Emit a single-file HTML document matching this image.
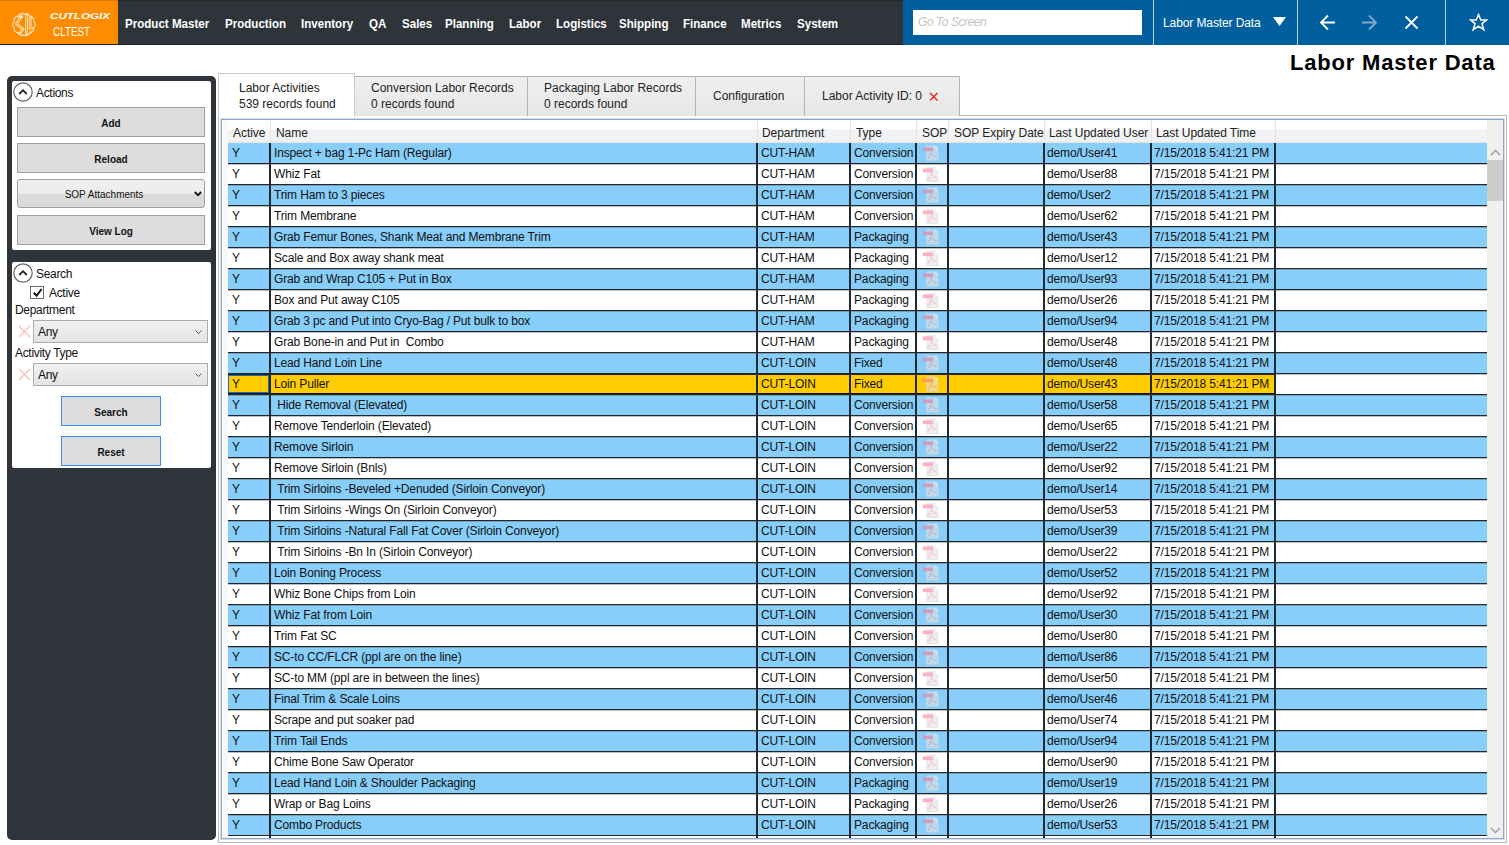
<!DOCTYPE html>
<html><head><meta charset="utf-8">
<style>
*{box-sizing:border-box;margin:0;padding:0}
html,body{width:1509px;height:845px;overflow:hidden;background:#fff;font-family:"Liberation Sans",sans-serif;color:#000;position:relative}
.abs{position:absolute}
#hdr{position:absolute;left:0;top:0;width:1509px;height:45px;background:#2e343a;border-top:1px solid #262b30;border-bottom:1px solid #1f2327}
#logo{position:absolute;left:0;top:0;width:118px;height:44px;background:#ff8c00;border-top:1px solid #d57a10}
.nav{position:absolute;top:15.5px;font-size:13px;font-weight:bold;color:#fff;white-space:nowrap;transform:scaleX(0.89);transform-origin:left}
#blue{position:absolute;left:903px;top:0;width:606px;height:45px;background:#025f9f}
.dv{position:absolute;top:0;width:1px;height:45px;background:#b9cfe3}
#title{position:absolute;left:1290px;top:49.5px;font-size:22px;font-weight:bold;letter-spacing:0.8px;white-space:nowrap}
#lp{position:absolute;left:7px;top:76px;width:209px;height:764px;background:#2e343a;border-radius:5px}
.box{position:absolute;background:#fff;border-radius:2px}
.btn{position:absolute;background:#dddddd;border:1px solid #a0a0a0;font-size:10px;font-weight:bold;text-align:center;color:#111}
.lbl{position:absolute;font-size:12px;letter-spacing:-0.32px;white-space:nowrap;color:#111}
.tab{position:absolute;top:76px;height:40px;background:linear-gradient(#f0f0f0,#e6e6e6);border:1px solid #b4b4b4;border-bottom:none;font-size:12px;letter-spacing:0px;color:#222;white-space:nowrap}
#grid{position:absolute;left:221px;top:119px;width:1283px;height:720px;border:1px solid #8ea7c2;background:#fff;overflow:hidden;box-shadow:0 0 0 1px rgba(160,185,210,0.45)}
.r{position:absolute;left:228px;width:1259px;height:21px;border-bottom:1px solid #1c2730}
.r.b{background:#87cefa}
.r.w{background:#fff}
.r.s{background:#fff}
.c{position:absolute;top:3px;font-size:12px;letter-spacing:-0.15px;white-space:nowrap;color:#111}
.pdfw{position:absolute;top:2px;opacity:0.6;line-height:0}
.vl{position:absolute;top:143px;width:2px;height:696px;background:#1f2b34}
.hvl{position:absolute;top:121px;width:1px;height:21px;background:#e2e2e4}
.hl2{position:absolute;left:228px;width:1259px;height:1px;background:rgba(90,70,50,0.35)}
.hd{position:absolute;top:5.5px;font-size:12px;letter-spacing:-0.05px;white-space:nowrap;color:#222}
</style></head><body>
<div id="hdr"></div>
<div id="logo">
  <svg class="abs" style="left:12px;top:12px" width="24" height="23" viewBox="0 0 24 23" fill="none" stroke-linejoin="round" stroke-linecap="round">
    <path d="M12.0 1.1 Q15.9 -0.5 18.1 3.1 Q22.2 4.1 21.9 8.3 Q24.6 11.5 21.9 14.7 Q22.2 18.9 18.1 19.9 Q15.9 23.5 12.0 21.9 Q8.1 23.5 5.9 19.9 Q1.8 18.9 2.1 14.7 Q-0.6 11.5 2.1 8.3 Q1.8 4.1 5.9 3.1 Q8.1 -0.5 12.0 1.1Z" stroke="#ffe8c6" stroke-width="1.1"/>
    <g stroke="#ffe8c6" stroke-width="2.8"><path d="M14.7 1.5 V21.2"/><path d="M9.6 3.6 C7.8 3.6 7.2 4.6 7.8 5.6 L4.4 11 L11 16.2 L8 20"/><path d="M18.2 5.4 V15.2 H20.2"/></g>
    <g stroke="#ff8c00" stroke-width="0.9"><path d="M14.7 2.5 V20.2"/><path d="M9.6 3.6 C7.8 3.6 7.2 4.6 7.8 5.6 L4.4 11 L11 16.2 L8 20"/><path d="M18.2 5.4 V15.2 H20.2"/></g>
    <circle cx="9" cy="4.2" r="1.3" fill="#ffe8c6"/><circle cx="7.6" cy="20.2" r="1.3" fill="#ffe8c6"/><circle cx="19" cy="18.8" r="1" fill="#ffe8c6"/>
  </svg>
  <div class="abs" style="left:50px;top:10px;font-size:9px;font-weight:bold;font-style:italic;color:#fff;transform:scaleX(1.29);transform-origin:left">CUTLOGIX</div>
  <div class="abs" style="left:53px;top:23px;font-size:13px;color:#fff;transform:scaleX(0.76);transform-origin:left">CLTEST</div>
</div>
<div class="nav" style="left:125px">Product Master</div>
<div class="nav" style="left:225px">Production</div>
<div class="nav" style="left:301px">Inventory</div>
<div class="nav" style="left:369px">QA</div>
<div class="nav" style="left:402px">Sales</div>
<div class="nav" style="left:445px">Planning</div>
<div class="nav" style="left:509px">Labor</div>
<div class="nav" style="left:556px">Logistics</div>
<div class="nav" style="left:619px">Shipping</div>
<div class="nav" style="left:683px">Finance</div>
<div class="nav" style="left:741px">Metrics</div>
<div class="nav" style="left:797px">System</div>
<div id="blue"></div>
<div class="abs" style="left:913px;top:10px;width:229px;height:25px;background:#fff"></div>
<div class="abs" style="left:918px;top:15px;font-size:12px;font-style:italic;color:#c4c4c4;letter-spacing:-0.45px">Go To Screen</div>
<div class="dv" style="left:1153px"></div>
<div class="dv" style="left:1297px"></div>
<div class="dv" style="left:1445px"></div>
<div class="abs" style="left:1163px;top:16px;font-size:12px;color:#fff;letter-spacing:-0.1px;white-space:nowrap">Labor Master Data</div>
<svg class="abs" style="left:1273px;top:17px" width="13" height="10"><path d="M0 0H13L6.5 9Z" fill="#fff"/></svg>
<svg class="abs" style="left:1319px;top:14px" width="18" height="17" fill="none" stroke="#fff" stroke-width="1.8"><path d="M16 8.5H2M9 1.5L2 8.5L9 15.5"/></svg>
<svg class="abs" style="left:1361px;top:14px" width="18" height="17" fill="none" stroke="#7fa9cf" stroke-width="1.8"><path d="M1 8.5H15M8 1.5L15 8.5L8 15.5"/></svg>
<svg class="abs" style="left:1404px;top:15px" width="15" height="15" fill="none" stroke="#fff" stroke-width="1.8"><path d="M1.5 1.5L13.5 13.5M13.5 1.5L1.5 13.5"/></svg>
<svg class="abs" style="left:1469px;top:13px" width="19" height="19" viewBox="0 0 19 19" fill="none" stroke="#fff" stroke-width="1.5"><path d="M9.5 1.5L11.8 7H17.5L13 10.6L14.8 16.8L9.5 13.2L4.2 16.8L6 10.6L1.5 7H7.2Z"/></svg>
<div id="title">Labor Master Data</div>

<div id="lp"></div>
<div class="box" style="left:12px;top:81px;width:199px;height:169px"></div>
<svg class="abs" style="left:13px;top:82px" width="21" height="21" fill="none"><circle cx="10" cy="10" r="9.2" stroke="#666" stroke-width="1.2"/><path d="M6.2 12L10 8.2L13.8 12" stroke="#222" stroke-width="1.8"/></svg>
<div class="lbl" style="left:36px;top:86px">Actions</div>
<div class="btn" style="left:17px;top:107px;width:188px;height:30px;line-height:31px">Add</div>
<div class="btn" style="left:17px;top:143px;width:188px;height:30px;line-height:31px">Reload</div>
<div class="btn" style="left:17px;top:179px;width:188px;height:29px;line-height:29px;font-weight:normal;font-size:10px;padding-right:14px;border-radius:3px;background:linear-gradient(#f1f1f1 0%,#ececec 50%,#dcdcdc 51%,#d9d9d9 100%)">SOP Attachments</div>
<svg class="abs" style="left:194px;top:191px" width="8" height="6" fill="none" stroke="#111" stroke-width="1.8"><path d="M0.8 1L4 4.2L7.2 1"/></svg>
<div class="btn" style="left:17px;top:215px;width:188px;height:30px;line-height:31px">View Log</div>

<div class="box" style="left:12px;top:262px;width:199px;height:206px"></div>
<svg class="abs" style="left:13px;top:263px" width="21" height="21" fill="none"><circle cx="10" cy="10" r="9.2" stroke="#666" stroke-width="1.2"/><path d="M6.2 12L10 8.2L13.8 12" stroke="#222" stroke-width="1.8"/></svg>
<div class="lbl" style="left:36px;top:267px">Search</div>
<div class="abs" style="left:30px;top:286px;width:14px;height:13px;border:1px solid #6a6a6a;background:#fff"></div>
<svg class="abs" style="left:32px;top:287px" width="11" height="11" fill="none" stroke="#111" stroke-width="2"><path d="M1.8 5.8L4.6 8.8L9.6 2"/></svg>
<div class="lbl" style="left:49px;top:286px">Active</div>
<div class="lbl" style="left:15px;top:303px">Department</div>
<svg class="abs" style="left:18px;top:325px" width="13" height="13" fill="none" stroke="#ffbdb5" stroke-width="1.3"><path d="M1 1L12 12M12 1L1 12"/></svg>
<div class="abs" style="left:33px;top:320px;width:175px;height:23px;background:linear-gradient(#f0f0f0,#e4e4e4);border:1px solid #acacac"></div>
<div class="lbl" style="left:38px;top:324.5px">Any</div>
<svg class="abs" style="left:195px;top:330px" width="7" height="4" fill="none" stroke="#555" stroke-width="1"><path d="M0.5 0.5L3.5 3.5L6.5 0.5"/></svg>
<div class="lbl" style="left:15px;top:346px">Activity Type</div>
<svg class="abs" style="left:18px;top:368px" width="13" height="13" fill="none" stroke="#ffbdb5" stroke-width="1.3"><path d="M1 1L12 12M12 1L1 12"/></svg>
<div class="abs" style="left:33px;top:363px;width:175px;height:23px;background:linear-gradient(#f0f0f0,#e4e4e4);border:1px solid #acacac"></div>
<div class="lbl" style="left:38px;top:367.5px">Any</div>
<svg class="abs" style="left:195px;top:373px" width="7" height="4" fill="none" stroke="#555" stroke-width="1"><path d="M0.5 0.5L3.5 3.5L6.5 0.5"/></svg>
<div class="btn" style="left:61px;top:396px;width:100px;height:30px;line-height:31px;border-color:#3c8ede">Search</div>
<div class="btn" style="left:61px;top:436px;width:100px;height:30px;line-height:31px;border-color:#3c8ede">Reset</div>

<!-- tabs -->
<div class="abs" style="left:218px;top:115px;width:1289px;height:728px;border:1px solid #b9b9b9;background:#fff"></div>
<div class="tab" style="left:354px;width:174px"><div class="abs" style="left:16px;top:3px;line-height:16px">Conversion Labor Records<br>0 records found</div></div>
<div class="tab" style="left:527px;width:169px"><div class="abs" style="left:16px;top:3px;line-height:16px">Packaging Labor Records<br>0 records found</div></div>
<div class="tab" style="left:695px;width:110px"><div class="abs" style="left:17px;top:12px">Configuration</div></div>
<div class="tab" style="left:804px;width:156px"><div class="abs" style="left:17px;top:12px">Labor Activity ID: 0</div>
  <svg class="abs" style="left:124px;top:15px" width="10" height="10" fill="none" stroke="#e8221c" stroke-width="1.4"><path d="M1 1L8.5 8.5M8.5 1L1 8.5"/></svg></div>
<div class="tab" style="left:218px;top:73px;width:137px;height:44px;background:#fff;border-color:#c9c9c9"><div class="abs" style="left:20px;top:5.5px;line-height:16px">Labor Activities<br>539 records found</div></div>

<div id="grid">
  <div class="abs" style="left:0;top:0;width:1265px;height:23px;background:linear-gradient(#fff 0px,#fff 9px,#f3f3f5 10px,#f2f2f4 21px,#ebe6e2 22px)"></div>
  <div class="abs" style="left:0;top:0;width:6px;height:718px;background:#f8f8fa"></div>
  <span class="hd" style="left:11px">Active</span>
  <span class="hd" style="left:54px">Name</span>
  <span class="hd" style="left:540px">Department</span>
  <span class="hd" style="left:634px">Type</span>
  <span class="hd" style="left:700px">SOP</span>
  <span class="hd" style="left:732px">SOP Expiry Date</span>
  <span class="hd" style="left:827px">Last Updated User</span>
  <span class="hd" style="left:934px">Last Updated Time</span>
  <div class="abs" style="left:1265px;top:0;width:17px;height:718px;background:#f0f0f0"></div>
  <div class="abs" style="left:1265px;top:40px;width:16px;height:41px;background:#cdcdcd"></div>
  <svg class="abs" style="left:1268px;top:29px" width="11" height="7" fill="none" stroke="#999" stroke-width="1.3"><path d="M1 6L5.5 1.5L10 6"/></svg>
  <svg class="abs" style="left:1268px;top:707px" width="11" height="7" fill="none" stroke="#999" stroke-width="1.3"><path d="M1 1L5.5 5.5L10 1"/></svg>
  <div class="abs" style="left:0;top:0;width:1265px;height:718px">
  <div style="position:absolute;left:-222px;top:-120px;width:1509px;height:845px">
<div class="r b" style="top:143px"><span class="c" style="left:4px">Y</span><span class="c" style="left:46px">Inspect + bag 1-Pc Ham (Regular)</span><span class="c" style="left:533px">CUT-HAM</span><span class="c" style="left:626px">Conversion</span><span class="pdfw" style="left:694px"><svg width="18" height="17" viewBox="0 0 18 17"><path d="M4.2 0.5H13.4L16.6 3.7V16H4.2Z" fill="#e2e2e2"/><path d="M4.2 15H16.6V16H4.2Z" fill="#cfcfcf"/><path d="M13.4 0.5L16.6 3.7H13.4Z" fill="#fff"/><rect x="0.7" y="2.5" width="10.3" height="3.7" fill="#f8809c"/><path d="M10 6.2Q8 11 5.8 13.8M9.3 8.8Q12 11 15 12" stroke="#f08c98" stroke-width="0.9" fill="none"/></svg></span><span class="c" style="left:819px">demo/User41</span><span class="c" style="left:926px">7/15/2018 5:41:21 PM</span></div>
<div class="r w" style="top:164px"><span class="c" style="left:4px">Y</span><span class="c" style="left:46px">Whiz Fat</span><span class="c" style="left:533px">CUT-HAM</span><span class="c" style="left:626px">Conversion</span><span class="pdfw" style="left:694px"><svg width="18" height="17" viewBox="0 0 18 17"><path d="M4.2 0.5H13.4L16.6 3.7V16H4.2Z" fill="#e2e2e2"/><path d="M4.2 15H16.6V16H4.2Z" fill="#cfcfcf"/><path d="M13.4 0.5L16.6 3.7H13.4Z" fill="#fff"/><rect x="0.7" y="2.5" width="10.3" height="3.7" fill="#f8809c"/><path d="M10 6.2Q8 11 5.8 13.8M9.3 8.8Q12 11 15 12" stroke="#f08c98" stroke-width="0.9" fill="none"/></svg></span><span class="c" style="left:819px">demo/User88</span><span class="c" style="left:926px">7/15/2018 5:41:21 PM</span></div>
<div class="r b" style="top:185px"><span class="c" style="left:4px">Y</span><span class="c" style="left:46px">Trim Ham to 3 pieces</span><span class="c" style="left:533px">CUT-HAM</span><span class="c" style="left:626px">Conversion</span><span class="pdfw" style="left:694px"><svg width="18" height="17" viewBox="0 0 18 17"><path d="M4.2 0.5H13.4L16.6 3.7V16H4.2Z" fill="#e2e2e2"/><path d="M4.2 15H16.6V16H4.2Z" fill="#cfcfcf"/><path d="M13.4 0.5L16.6 3.7H13.4Z" fill="#fff"/><rect x="0.7" y="2.5" width="10.3" height="3.7" fill="#f8809c"/><path d="M10 6.2Q8 11 5.8 13.8M9.3 8.8Q12 11 15 12" stroke="#f08c98" stroke-width="0.9" fill="none"/></svg></span><span class="c" style="left:819px">demo/User2</span><span class="c" style="left:926px">7/15/2018 5:41:21 PM</span></div>
<div class="r w" style="top:206px"><span class="c" style="left:4px">Y</span><span class="c" style="left:46px">Trim Membrane</span><span class="c" style="left:533px">CUT-HAM</span><span class="c" style="left:626px">Conversion</span><span class="pdfw" style="left:694px"><svg width="18" height="17" viewBox="0 0 18 17"><path d="M4.2 0.5H13.4L16.6 3.7V16H4.2Z" fill="#e2e2e2"/><path d="M4.2 15H16.6V16H4.2Z" fill="#cfcfcf"/><path d="M13.4 0.5L16.6 3.7H13.4Z" fill="#fff"/><rect x="0.7" y="2.5" width="10.3" height="3.7" fill="#f8809c"/><path d="M10 6.2Q8 11 5.8 13.8M9.3 8.8Q12 11 15 12" stroke="#f08c98" stroke-width="0.9" fill="none"/></svg></span><span class="c" style="left:819px">demo/User62</span><span class="c" style="left:926px">7/15/2018 5:41:21 PM</span></div>
<div class="r b" style="top:227px"><span class="c" style="left:4px">Y</span><span class="c" style="left:46px">Grab Femur Bones, Shank Meat and Membrane Trim</span><span class="c" style="left:533px">CUT-HAM</span><span class="c" style="left:626px">Packaging</span><span class="pdfw" style="left:694px"><svg width="18" height="17" viewBox="0 0 18 17"><path d="M4.2 0.5H13.4L16.6 3.7V16H4.2Z" fill="#e2e2e2"/><path d="M4.2 15H16.6V16H4.2Z" fill="#cfcfcf"/><path d="M13.4 0.5L16.6 3.7H13.4Z" fill="#fff"/><rect x="0.7" y="2.5" width="10.3" height="3.7" fill="#f8809c"/><path d="M10 6.2Q8 11 5.8 13.8M9.3 8.8Q12 11 15 12" stroke="#f08c98" stroke-width="0.9" fill="none"/></svg></span><span class="c" style="left:819px">demo/User43</span><span class="c" style="left:926px">7/15/2018 5:41:21 PM</span></div>
<div class="r w" style="top:248px"><span class="c" style="left:4px">Y</span><span class="c" style="left:46px">Scale and Box away shank meat</span><span class="c" style="left:533px">CUT-HAM</span><span class="c" style="left:626px">Packaging</span><span class="pdfw" style="left:694px"><svg width="18" height="17" viewBox="0 0 18 17"><path d="M4.2 0.5H13.4L16.6 3.7V16H4.2Z" fill="#e2e2e2"/><path d="M4.2 15H16.6V16H4.2Z" fill="#cfcfcf"/><path d="M13.4 0.5L16.6 3.7H13.4Z" fill="#fff"/><rect x="0.7" y="2.5" width="10.3" height="3.7" fill="#f8809c"/><path d="M10 6.2Q8 11 5.8 13.8M9.3 8.8Q12 11 15 12" stroke="#f08c98" stroke-width="0.9" fill="none"/></svg></span><span class="c" style="left:819px">demo/User12</span><span class="c" style="left:926px">7/15/2018 5:41:21 PM</span></div>
<div class="r b" style="top:269px"><span class="c" style="left:4px">Y</span><span class="c" style="left:46px">Grab and Wrap C105 + Put in Box</span><span class="c" style="left:533px">CUT-HAM</span><span class="c" style="left:626px">Packaging</span><span class="pdfw" style="left:694px"><svg width="18" height="17" viewBox="0 0 18 17"><path d="M4.2 0.5H13.4L16.6 3.7V16H4.2Z" fill="#e2e2e2"/><path d="M4.2 15H16.6V16H4.2Z" fill="#cfcfcf"/><path d="M13.4 0.5L16.6 3.7H13.4Z" fill="#fff"/><rect x="0.7" y="2.5" width="10.3" height="3.7" fill="#f8809c"/><path d="M10 6.2Q8 11 5.8 13.8M9.3 8.8Q12 11 15 12" stroke="#f08c98" stroke-width="0.9" fill="none"/></svg></span><span class="c" style="left:819px">demo/User93</span><span class="c" style="left:926px">7/15/2018 5:41:21 PM</span></div>
<div class="r w" style="top:290px"><span class="c" style="left:4px">Y</span><span class="c" style="left:46px">Box and Put away C105</span><span class="c" style="left:533px">CUT-HAM</span><span class="c" style="left:626px">Packaging</span><span class="pdfw" style="left:694px"><svg width="18" height="17" viewBox="0 0 18 17"><path d="M4.2 0.5H13.4L16.6 3.7V16H4.2Z" fill="#e2e2e2"/><path d="M4.2 15H16.6V16H4.2Z" fill="#cfcfcf"/><path d="M13.4 0.5L16.6 3.7H13.4Z" fill="#fff"/><rect x="0.7" y="2.5" width="10.3" height="3.7" fill="#f8809c"/><path d="M10 6.2Q8 11 5.8 13.8M9.3 8.8Q12 11 15 12" stroke="#f08c98" stroke-width="0.9" fill="none"/></svg></span><span class="c" style="left:819px">demo/User26</span><span class="c" style="left:926px">7/15/2018 5:41:21 PM</span></div>
<div class="r b" style="top:311px"><span class="c" style="left:4px">Y</span><span class="c" style="left:46px">Grab 3 pc and Put into Cryo-Bag / Put bulk to box</span><span class="c" style="left:533px">CUT-HAM</span><span class="c" style="left:626px">Packaging</span><span class="pdfw" style="left:694px"><svg width="18" height="17" viewBox="0 0 18 17"><path d="M4.2 0.5H13.4L16.6 3.7V16H4.2Z" fill="#e2e2e2"/><path d="M4.2 15H16.6V16H4.2Z" fill="#cfcfcf"/><path d="M13.4 0.5L16.6 3.7H13.4Z" fill="#fff"/><rect x="0.7" y="2.5" width="10.3" height="3.7" fill="#f8809c"/><path d="M10 6.2Q8 11 5.8 13.8M9.3 8.8Q12 11 15 12" stroke="#f08c98" stroke-width="0.9" fill="none"/></svg></span><span class="c" style="left:819px">demo/User94</span><span class="c" style="left:926px">7/15/2018 5:41:21 PM</span></div>
<div class="r w" style="top:332px"><span class="c" style="left:4px">Y</span><span class="c" style="left:46px">Grab Bone-in and Put in &nbsp;Combo</span><span class="c" style="left:533px">CUT-HAM</span><span class="c" style="left:626px">Packaging</span><span class="pdfw" style="left:694px"><svg width="18" height="17" viewBox="0 0 18 17"><path d="M4.2 0.5H13.4L16.6 3.7V16H4.2Z" fill="#e2e2e2"/><path d="M4.2 15H16.6V16H4.2Z" fill="#cfcfcf"/><path d="M13.4 0.5L16.6 3.7H13.4Z" fill="#fff"/><rect x="0.7" y="2.5" width="10.3" height="3.7" fill="#f8809c"/><path d="M10 6.2Q8 11 5.8 13.8M9.3 8.8Q12 11 15 12" stroke="#f08c98" stroke-width="0.9" fill="none"/></svg></span><span class="c" style="left:819px">demo/User48</span><span class="c" style="left:926px">7/15/2018 5:41:21 PM</span></div>
<div class="r b" style="top:353px"><span class="c" style="left:4px">Y</span><span class="c" style="left:46px">Lead Hand Loin Line</span><span class="c" style="left:533px">CUT-LOIN</span><span class="c" style="left:626px">Fixed</span><span class="pdfw" style="left:694px"><svg width="18" height="17" viewBox="0 0 18 17"><path d="M4.2 0.5H13.4L16.6 3.7V16H4.2Z" fill="#e2e2e2"/><path d="M4.2 15H16.6V16H4.2Z" fill="#cfcfcf"/><path d="M13.4 0.5L16.6 3.7H13.4Z" fill="#fff"/><rect x="0.7" y="2.5" width="10.3" height="3.7" fill="#f8809c"/><path d="M10 6.2Q8 11 5.8 13.8M9.3 8.8Q12 11 15 12" stroke="#f08c98" stroke-width="0.9" fill="none"/></svg></span><span class="c" style="left:819px">demo/User48</span><span class="c" style="left:926px">7/15/2018 5:41:21 PM</span></div>
<div class="r s" style="top:374px"><div style="position:absolute;left:0;top:0;width:1047px;height:20px;background:#ffcc00;border-top:1px solid #111;border-bottom:1px solid #111"></div><div style="position:absolute;left:0;top:1px;width:41px;height:18px;border:1px solid #1769c4"></div><span class="c" style="left:4px">Y</span><span class="c" style="left:46px">Loin Puller</span><span class="c" style="left:533px">CUT-LOIN</span><span class="c" style="left:626px">Fixed</span><span class="pdfw" style="left:694px"><svg width="18" height="17" viewBox="0 0 18 17"><path d="M4.2 0.5H13.4L16.6 3.7V16H4.2Z" fill="#e2e2e2"/><path d="M4.2 15H16.6V16H4.2Z" fill="#cfcfcf"/><path d="M13.4 0.5L16.6 3.7H13.4Z" fill="#fff"/><rect x="0.7" y="2.5" width="10.3" height="3.7" fill="#f8809c"/><path d="M10 6.2Q8 11 5.8 13.8M9.3 8.8Q12 11 15 12" stroke="#f08c98" stroke-width="0.9" fill="none"/></svg></span><span class="c" style="left:819px">demo/User43</span><span class="c" style="left:926px">7/15/2018 5:41:21 PM</span></div>
<div class="r b" style="top:395px"><span class="c" style="left:4px">Y</span><span class="c" style="left:46px">&nbsp;Hide Removal (Elevated)</span><span class="c" style="left:533px">CUT-LOIN</span><span class="c" style="left:626px">Conversion</span><span class="pdfw" style="left:694px"><svg width="18" height="17" viewBox="0 0 18 17"><path d="M4.2 0.5H13.4L16.6 3.7V16H4.2Z" fill="#e2e2e2"/><path d="M4.2 15H16.6V16H4.2Z" fill="#cfcfcf"/><path d="M13.4 0.5L16.6 3.7H13.4Z" fill="#fff"/><rect x="0.7" y="2.5" width="10.3" height="3.7" fill="#f8809c"/><path d="M10 6.2Q8 11 5.8 13.8M9.3 8.8Q12 11 15 12" stroke="#f08c98" stroke-width="0.9" fill="none"/></svg></span><span class="c" style="left:819px">demo/User58</span><span class="c" style="left:926px">7/15/2018 5:41:21 PM</span></div>
<div class="r w" style="top:416px"><span class="c" style="left:4px">Y</span><span class="c" style="left:46px">Remove Tenderloin (Elevated)</span><span class="c" style="left:533px">CUT-LOIN</span><span class="c" style="left:626px">Conversion</span><span class="pdfw" style="left:694px"><svg width="18" height="17" viewBox="0 0 18 17"><path d="M4.2 0.5H13.4L16.6 3.7V16H4.2Z" fill="#e2e2e2"/><path d="M4.2 15H16.6V16H4.2Z" fill="#cfcfcf"/><path d="M13.4 0.5L16.6 3.7H13.4Z" fill="#fff"/><rect x="0.7" y="2.5" width="10.3" height="3.7" fill="#f8809c"/><path d="M10 6.2Q8 11 5.8 13.8M9.3 8.8Q12 11 15 12" stroke="#f08c98" stroke-width="0.9" fill="none"/></svg></span><span class="c" style="left:819px">demo/User65</span><span class="c" style="left:926px">7/15/2018 5:41:21 PM</span></div>
<div class="r b" style="top:437px"><span class="c" style="left:4px">Y</span><span class="c" style="left:46px">Remove Sirloin</span><span class="c" style="left:533px">CUT-LOIN</span><span class="c" style="left:626px">Conversion</span><span class="pdfw" style="left:694px"><svg width="18" height="17" viewBox="0 0 18 17"><path d="M4.2 0.5H13.4L16.6 3.7V16H4.2Z" fill="#e2e2e2"/><path d="M4.2 15H16.6V16H4.2Z" fill="#cfcfcf"/><path d="M13.4 0.5L16.6 3.7H13.4Z" fill="#fff"/><rect x="0.7" y="2.5" width="10.3" height="3.7" fill="#f8809c"/><path d="M10 6.2Q8 11 5.8 13.8M9.3 8.8Q12 11 15 12" stroke="#f08c98" stroke-width="0.9" fill="none"/></svg></span><span class="c" style="left:819px">demo/User22</span><span class="c" style="left:926px">7/15/2018 5:41:21 PM</span></div>
<div class="r w" style="top:458px"><span class="c" style="left:4px">Y</span><span class="c" style="left:46px">Remove Sirloin (Bnls)</span><span class="c" style="left:533px">CUT-LOIN</span><span class="c" style="left:626px">Conversion</span><span class="pdfw" style="left:694px"><svg width="18" height="17" viewBox="0 0 18 17"><path d="M4.2 0.5H13.4L16.6 3.7V16H4.2Z" fill="#e2e2e2"/><path d="M4.2 15H16.6V16H4.2Z" fill="#cfcfcf"/><path d="M13.4 0.5L16.6 3.7H13.4Z" fill="#fff"/><rect x="0.7" y="2.5" width="10.3" height="3.7" fill="#f8809c"/><path d="M10 6.2Q8 11 5.8 13.8M9.3 8.8Q12 11 15 12" stroke="#f08c98" stroke-width="0.9" fill="none"/></svg></span><span class="c" style="left:819px">demo/User92</span><span class="c" style="left:926px">7/15/2018 5:41:21 PM</span></div>
<div class="r b" style="top:479px"><span class="c" style="left:4px">Y</span><span class="c" style="left:46px">&nbsp;Trim Sirloins -Beveled +Denuded (Sirloin Conveyor)</span><span class="c" style="left:533px">CUT-LOIN</span><span class="c" style="left:626px">Conversion</span><span class="pdfw" style="left:694px"><svg width="18" height="17" viewBox="0 0 18 17"><path d="M4.2 0.5H13.4L16.6 3.7V16H4.2Z" fill="#e2e2e2"/><path d="M4.2 15H16.6V16H4.2Z" fill="#cfcfcf"/><path d="M13.4 0.5L16.6 3.7H13.4Z" fill="#fff"/><rect x="0.7" y="2.5" width="10.3" height="3.7" fill="#f8809c"/><path d="M10 6.2Q8 11 5.8 13.8M9.3 8.8Q12 11 15 12" stroke="#f08c98" stroke-width="0.9" fill="none"/></svg></span><span class="c" style="left:819px">demo/User14</span><span class="c" style="left:926px">7/15/2018 5:41:21 PM</span></div>
<div class="r w" style="top:500px"><span class="c" style="left:4px">Y</span><span class="c" style="left:46px">&nbsp;Trim Sirloins -Wings On (Sirloin Conveyor)</span><span class="c" style="left:533px">CUT-LOIN</span><span class="c" style="left:626px">Conversion</span><span class="pdfw" style="left:694px"><svg width="18" height="17" viewBox="0 0 18 17"><path d="M4.2 0.5H13.4L16.6 3.7V16H4.2Z" fill="#e2e2e2"/><path d="M4.2 15H16.6V16H4.2Z" fill="#cfcfcf"/><path d="M13.4 0.5L16.6 3.7H13.4Z" fill="#fff"/><rect x="0.7" y="2.5" width="10.3" height="3.7" fill="#f8809c"/><path d="M10 6.2Q8 11 5.8 13.8M9.3 8.8Q12 11 15 12" stroke="#f08c98" stroke-width="0.9" fill="none"/></svg></span><span class="c" style="left:819px">demo/User53</span><span class="c" style="left:926px">7/15/2018 5:41:21 PM</span></div>
<div class="r b" style="top:521px"><span class="c" style="left:4px">Y</span><span class="c" style="left:46px">&nbsp;Trim Sirloins -Natural Fall Fat Cover (Sirloin Conveyor)</span><span class="c" style="left:533px">CUT-LOIN</span><span class="c" style="left:626px">Conversion</span><span class="pdfw" style="left:694px"><svg width="18" height="17" viewBox="0 0 18 17"><path d="M4.2 0.5H13.4L16.6 3.7V16H4.2Z" fill="#e2e2e2"/><path d="M4.2 15H16.6V16H4.2Z" fill="#cfcfcf"/><path d="M13.4 0.5L16.6 3.7H13.4Z" fill="#fff"/><rect x="0.7" y="2.5" width="10.3" height="3.7" fill="#f8809c"/><path d="M10 6.2Q8 11 5.8 13.8M9.3 8.8Q12 11 15 12" stroke="#f08c98" stroke-width="0.9" fill="none"/></svg></span><span class="c" style="left:819px">demo/User39</span><span class="c" style="left:926px">7/15/2018 5:41:21 PM</span></div>
<div class="r w" style="top:542px"><span class="c" style="left:4px">Y</span><span class="c" style="left:46px">&nbsp;Trim Sirloins -Bn In (Sirloin Conveyor)</span><span class="c" style="left:533px">CUT-LOIN</span><span class="c" style="left:626px">Conversion</span><span class="pdfw" style="left:694px"><svg width="18" height="17" viewBox="0 0 18 17"><path d="M4.2 0.5H13.4L16.6 3.7V16H4.2Z" fill="#e2e2e2"/><path d="M4.2 15H16.6V16H4.2Z" fill="#cfcfcf"/><path d="M13.4 0.5L16.6 3.7H13.4Z" fill="#fff"/><rect x="0.7" y="2.5" width="10.3" height="3.7" fill="#f8809c"/><path d="M10 6.2Q8 11 5.8 13.8M9.3 8.8Q12 11 15 12" stroke="#f08c98" stroke-width="0.9" fill="none"/></svg></span><span class="c" style="left:819px">demo/User22</span><span class="c" style="left:926px">7/15/2018 5:41:21 PM</span></div>
<div class="r b" style="top:563px"><span class="c" style="left:4px">Y</span><span class="c" style="left:46px">Loin Boning Process</span><span class="c" style="left:533px">CUT-LOIN</span><span class="c" style="left:626px">Conversion</span><span class="pdfw" style="left:694px"><svg width="18" height="17" viewBox="0 0 18 17"><path d="M4.2 0.5H13.4L16.6 3.7V16H4.2Z" fill="#e2e2e2"/><path d="M4.2 15H16.6V16H4.2Z" fill="#cfcfcf"/><path d="M13.4 0.5L16.6 3.7H13.4Z" fill="#fff"/><rect x="0.7" y="2.5" width="10.3" height="3.7" fill="#f8809c"/><path d="M10 6.2Q8 11 5.8 13.8M9.3 8.8Q12 11 15 12" stroke="#f08c98" stroke-width="0.9" fill="none"/></svg></span><span class="c" style="left:819px">demo/User52</span><span class="c" style="left:926px">7/15/2018 5:41:21 PM</span></div>
<div class="r w" style="top:584px"><span class="c" style="left:4px">Y</span><span class="c" style="left:46px">Whiz Bone Chips from Loin</span><span class="c" style="left:533px">CUT-LOIN</span><span class="c" style="left:626px">Conversion</span><span class="pdfw" style="left:694px"><svg width="18" height="17" viewBox="0 0 18 17"><path d="M4.2 0.5H13.4L16.6 3.7V16H4.2Z" fill="#e2e2e2"/><path d="M4.2 15H16.6V16H4.2Z" fill="#cfcfcf"/><path d="M13.4 0.5L16.6 3.7H13.4Z" fill="#fff"/><rect x="0.7" y="2.5" width="10.3" height="3.7" fill="#f8809c"/><path d="M10 6.2Q8 11 5.8 13.8M9.3 8.8Q12 11 15 12" stroke="#f08c98" stroke-width="0.9" fill="none"/></svg></span><span class="c" style="left:819px">demo/User92</span><span class="c" style="left:926px">7/15/2018 5:41:21 PM</span></div>
<div class="r b" style="top:605px"><span class="c" style="left:4px">Y</span><span class="c" style="left:46px">Whiz Fat from Loin</span><span class="c" style="left:533px">CUT-LOIN</span><span class="c" style="left:626px">Conversion</span><span class="pdfw" style="left:694px"><svg width="18" height="17" viewBox="0 0 18 17"><path d="M4.2 0.5H13.4L16.6 3.7V16H4.2Z" fill="#e2e2e2"/><path d="M4.2 15H16.6V16H4.2Z" fill="#cfcfcf"/><path d="M13.4 0.5L16.6 3.7H13.4Z" fill="#fff"/><rect x="0.7" y="2.5" width="10.3" height="3.7" fill="#f8809c"/><path d="M10 6.2Q8 11 5.8 13.8M9.3 8.8Q12 11 15 12" stroke="#f08c98" stroke-width="0.9" fill="none"/></svg></span><span class="c" style="left:819px">demo/User30</span><span class="c" style="left:926px">7/15/2018 5:41:21 PM</span></div>
<div class="r w" style="top:626px"><span class="c" style="left:4px">Y</span><span class="c" style="left:46px">Trim Fat SC</span><span class="c" style="left:533px">CUT-LOIN</span><span class="c" style="left:626px">Conversion</span><span class="pdfw" style="left:694px"><svg width="18" height="17" viewBox="0 0 18 17"><path d="M4.2 0.5H13.4L16.6 3.7V16H4.2Z" fill="#e2e2e2"/><path d="M4.2 15H16.6V16H4.2Z" fill="#cfcfcf"/><path d="M13.4 0.5L16.6 3.7H13.4Z" fill="#fff"/><rect x="0.7" y="2.5" width="10.3" height="3.7" fill="#f8809c"/><path d="M10 6.2Q8 11 5.8 13.8M9.3 8.8Q12 11 15 12" stroke="#f08c98" stroke-width="0.9" fill="none"/></svg></span><span class="c" style="left:819px">demo/User80</span><span class="c" style="left:926px">7/15/2018 5:41:21 PM</span></div>
<div class="r b" style="top:647px"><span class="c" style="left:4px">Y</span><span class="c" style="left:46px">SC-to CC/FLCR (ppl are on the line)</span><span class="c" style="left:533px">CUT-LOIN</span><span class="c" style="left:626px">Conversion</span><span class="pdfw" style="left:694px"><svg width="18" height="17" viewBox="0 0 18 17"><path d="M4.2 0.5H13.4L16.6 3.7V16H4.2Z" fill="#e2e2e2"/><path d="M4.2 15H16.6V16H4.2Z" fill="#cfcfcf"/><path d="M13.4 0.5L16.6 3.7H13.4Z" fill="#fff"/><rect x="0.7" y="2.5" width="10.3" height="3.7" fill="#f8809c"/><path d="M10 6.2Q8 11 5.8 13.8M9.3 8.8Q12 11 15 12" stroke="#f08c98" stroke-width="0.9" fill="none"/></svg></span><span class="c" style="left:819px">demo/User86</span><span class="c" style="left:926px">7/15/2018 5:41:21 PM</span></div>
<div class="r w" style="top:668px"><span class="c" style="left:4px">Y</span><span class="c" style="left:46px">SC-to MM (ppl are in between the lines)</span><span class="c" style="left:533px">CUT-LOIN</span><span class="c" style="left:626px">Conversion</span><span class="pdfw" style="left:694px"><svg width="18" height="17" viewBox="0 0 18 17"><path d="M4.2 0.5H13.4L16.6 3.7V16H4.2Z" fill="#e2e2e2"/><path d="M4.2 15H16.6V16H4.2Z" fill="#cfcfcf"/><path d="M13.4 0.5L16.6 3.7H13.4Z" fill="#fff"/><rect x="0.7" y="2.5" width="10.3" height="3.7" fill="#f8809c"/><path d="M10 6.2Q8 11 5.8 13.8M9.3 8.8Q12 11 15 12" stroke="#f08c98" stroke-width="0.9" fill="none"/></svg></span><span class="c" style="left:819px">demo/User50</span><span class="c" style="left:926px">7/15/2018 5:41:21 PM</span></div>
<div class="r b" style="top:689px"><span class="c" style="left:4px">Y</span><span class="c" style="left:46px">Final Trim &amp; Scale Loins</span><span class="c" style="left:533px">CUT-LOIN</span><span class="c" style="left:626px">Conversion</span><span class="pdfw" style="left:694px"><svg width="18" height="17" viewBox="0 0 18 17"><path d="M4.2 0.5H13.4L16.6 3.7V16H4.2Z" fill="#e2e2e2"/><path d="M4.2 15H16.6V16H4.2Z" fill="#cfcfcf"/><path d="M13.4 0.5L16.6 3.7H13.4Z" fill="#fff"/><rect x="0.7" y="2.5" width="10.3" height="3.7" fill="#f8809c"/><path d="M10 6.2Q8 11 5.8 13.8M9.3 8.8Q12 11 15 12" stroke="#f08c98" stroke-width="0.9" fill="none"/></svg></span><span class="c" style="left:819px">demo/User46</span><span class="c" style="left:926px">7/15/2018 5:41:21 PM</span></div>
<div class="r w" style="top:710px"><span class="c" style="left:4px">Y</span><span class="c" style="left:46px">Scrape and put soaker pad</span><span class="c" style="left:533px">CUT-LOIN</span><span class="c" style="left:626px">Conversion</span><span class="pdfw" style="left:694px"><svg width="18" height="17" viewBox="0 0 18 17"><path d="M4.2 0.5H13.4L16.6 3.7V16H4.2Z" fill="#e2e2e2"/><path d="M4.2 15H16.6V16H4.2Z" fill="#cfcfcf"/><path d="M13.4 0.5L16.6 3.7H13.4Z" fill="#fff"/><rect x="0.7" y="2.5" width="10.3" height="3.7" fill="#f8809c"/><path d="M10 6.2Q8 11 5.8 13.8M9.3 8.8Q12 11 15 12" stroke="#f08c98" stroke-width="0.9" fill="none"/></svg></span><span class="c" style="left:819px">demo/User74</span><span class="c" style="left:926px">7/15/2018 5:41:21 PM</span></div>
<div class="r b" style="top:731px"><span class="c" style="left:4px">Y</span><span class="c" style="left:46px">Trim Tail Ends</span><span class="c" style="left:533px">CUT-LOIN</span><span class="c" style="left:626px">Conversion</span><span class="pdfw" style="left:694px"><svg width="18" height="17" viewBox="0 0 18 17"><path d="M4.2 0.5H13.4L16.6 3.7V16H4.2Z" fill="#e2e2e2"/><path d="M4.2 15H16.6V16H4.2Z" fill="#cfcfcf"/><path d="M13.4 0.5L16.6 3.7H13.4Z" fill="#fff"/><rect x="0.7" y="2.5" width="10.3" height="3.7" fill="#f8809c"/><path d="M10 6.2Q8 11 5.8 13.8M9.3 8.8Q12 11 15 12" stroke="#f08c98" stroke-width="0.9" fill="none"/></svg></span><span class="c" style="left:819px">demo/User94</span><span class="c" style="left:926px">7/15/2018 5:41:21 PM</span></div>
<div class="r w" style="top:752px"><span class="c" style="left:4px">Y</span><span class="c" style="left:46px">Chime Bone Saw Operator</span><span class="c" style="left:533px">CUT-LOIN</span><span class="c" style="left:626px">Conversion</span><span class="pdfw" style="left:694px"><svg width="18" height="17" viewBox="0 0 18 17"><path d="M4.2 0.5H13.4L16.6 3.7V16H4.2Z" fill="#e2e2e2"/><path d="M4.2 15H16.6V16H4.2Z" fill="#cfcfcf"/><path d="M13.4 0.5L16.6 3.7H13.4Z" fill="#fff"/><rect x="0.7" y="2.5" width="10.3" height="3.7" fill="#f8809c"/><path d="M10 6.2Q8 11 5.8 13.8M9.3 8.8Q12 11 15 12" stroke="#f08c98" stroke-width="0.9" fill="none"/></svg></span><span class="c" style="left:819px">demo/User90</span><span class="c" style="left:926px">7/15/2018 5:41:21 PM</span></div>
<div class="r b" style="top:773px"><span class="c" style="left:4px">Y</span><span class="c" style="left:46px">Lead Hand Loin &amp; Shoulder Packaging</span><span class="c" style="left:533px">CUT-LOIN</span><span class="c" style="left:626px">Packaging</span><span class="pdfw" style="left:694px"><svg width="18" height="17" viewBox="0 0 18 17"><path d="M4.2 0.5H13.4L16.6 3.7V16H4.2Z" fill="#e2e2e2"/><path d="M4.2 15H16.6V16H4.2Z" fill="#cfcfcf"/><path d="M13.4 0.5L16.6 3.7H13.4Z" fill="#fff"/><rect x="0.7" y="2.5" width="10.3" height="3.7" fill="#f8809c"/><path d="M10 6.2Q8 11 5.8 13.8M9.3 8.8Q12 11 15 12" stroke="#f08c98" stroke-width="0.9" fill="none"/></svg></span><span class="c" style="left:819px">demo/User19</span><span class="c" style="left:926px">7/15/2018 5:41:21 PM</span></div>
<div class="r w" style="top:794px"><span class="c" style="left:4px">Y</span><span class="c" style="left:46px">Wrap or Bag Loins</span><span class="c" style="left:533px">CUT-LOIN</span><span class="c" style="left:626px">Packaging</span><span class="pdfw" style="left:694px"><svg width="18" height="17" viewBox="0 0 18 17"><path d="M4.2 0.5H13.4L16.6 3.7V16H4.2Z" fill="#e2e2e2"/><path d="M4.2 15H16.6V16H4.2Z" fill="#cfcfcf"/><path d="M13.4 0.5L16.6 3.7H13.4Z" fill="#fff"/><rect x="0.7" y="2.5" width="10.3" height="3.7" fill="#f8809c"/><path d="M10 6.2Q8 11 5.8 13.8M9.3 8.8Q12 11 15 12" stroke="#f08c98" stroke-width="0.9" fill="none"/></svg></span><span class="c" style="left:819px">demo/User26</span><span class="c" style="left:926px">7/15/2018 5:41:21 PM</span></div>
<div class="r b" style="top:815px"><span class="c" style="left:4px">Y</span><span class="c" style="left:46px">Combo Products</span><span class="c" style="left:533px">CUT-LOIN</span><span class="c" style="left:626px">Packaging</span><span class="pdfw" style="left:694px"><svg width="18" height="17" viewBox="0 0 18 17"><path d="M4.2 0.5H13.4L16.6 3.7V16H4.2Z" fill="#e2e2e2"/><path d="M4.2 15H16.6V16H4.2Z" fill="#cfcfcf"/><path d="M13.4 0.5L16.6 3.7H13.4Z" fill="#fff"/><rect x="0.7" y="2.5" width="10.3" height="3.7" fill="#f8809c"/><path d="M10 6.2Q8 11 5.8 13.8M9.3 8.8Q12 11 15 12" stroke="#f08c98" stroke-width="0.9" fill="none"/></svg></span><span class="c" style="left:819px">demo/User53</span><span class="c" style="left:926px">7/15/2018 5:41:21 PM</span></div>
<div class="vl" style="left:269px"></div>
<div class="vl" style="left:756px"></div>
<div class="vl" style="left:849px"></div>
<div class="vl" style="left:915px"></div>
<div class="vl" style="left:947px"></div>
<div class="vl" style="left:1043px"></div>
<div class="vl" style="left:1150px"></div>
<div class="vl" style="left:1274px"></div>
<div class="hvl" style="left:270px"></div>
<div class="hvl" style="left:757px"></div>
<div class="hvl" style="left:850px"></div>
<div class="hvl" style="left:916px"></div>
<div class="hvl" style="left:948px"></div>
<div class="hvl" style="left:1044px"></div>
<div class="hvl" style="left:1151px"></div>
<div class="hvl" style="left:1275px"></div>
<div class="hl2" style="top:164px"></div>
<div class="hl2" style="top:185px"></div>
<div class="hl2" style="top:206px"></div>
<div class="hl2" style="top:227px"></div>
<div class="hl2" style="top:248px"></div>
<div class="hl2" style="top:269px"></div>
<div class="hl2" style="top:290px"></div>
<div class="hl2" style="top:311px"></div>
<div class="hl2" style="top:332px"></div>
<div class="hl2" style="top:353px"></div>
<div class="hl2" style="top:374px"></div>
<div class="hl2" style="top:395px"></div>
<div class="hl2" style="top:416px"></div>
<div class="hl2" style="top:437px"></div>
<div class="hl2" style="top:458px"></div>
<div class="hl2" style="top:479px"></div>
<div class="hl2" style="top:500px"></div>
<div class="hl2" style="top:521px"></div>
<div class="hl2" style="top:542px"></div>
<div class="hl2" style="top:563px"></div>
<div class="hl2" style="top:584px"></div>
<div class="hl2" style="top:605px"></div>
<div class="hl2" style="top:626px"></div>
<div class="hl2" style="top:647px"></div>
<div class="hl2" style="top:668px"></div>
<div class="hl2" style="top:689px"></div>
<div class="hl2" style="top:710px"></div>
<div class="hl2" style="top:731px"></div>
<div class="hl2" style="top:752px"></div>
<div class="hl2" style="top:773px"></div>
<div class="hl2" style="top:794px"></div>
<div class="hl2" style="top:815px"></div>
  </div>
  </div>
</div>
</body></html>
